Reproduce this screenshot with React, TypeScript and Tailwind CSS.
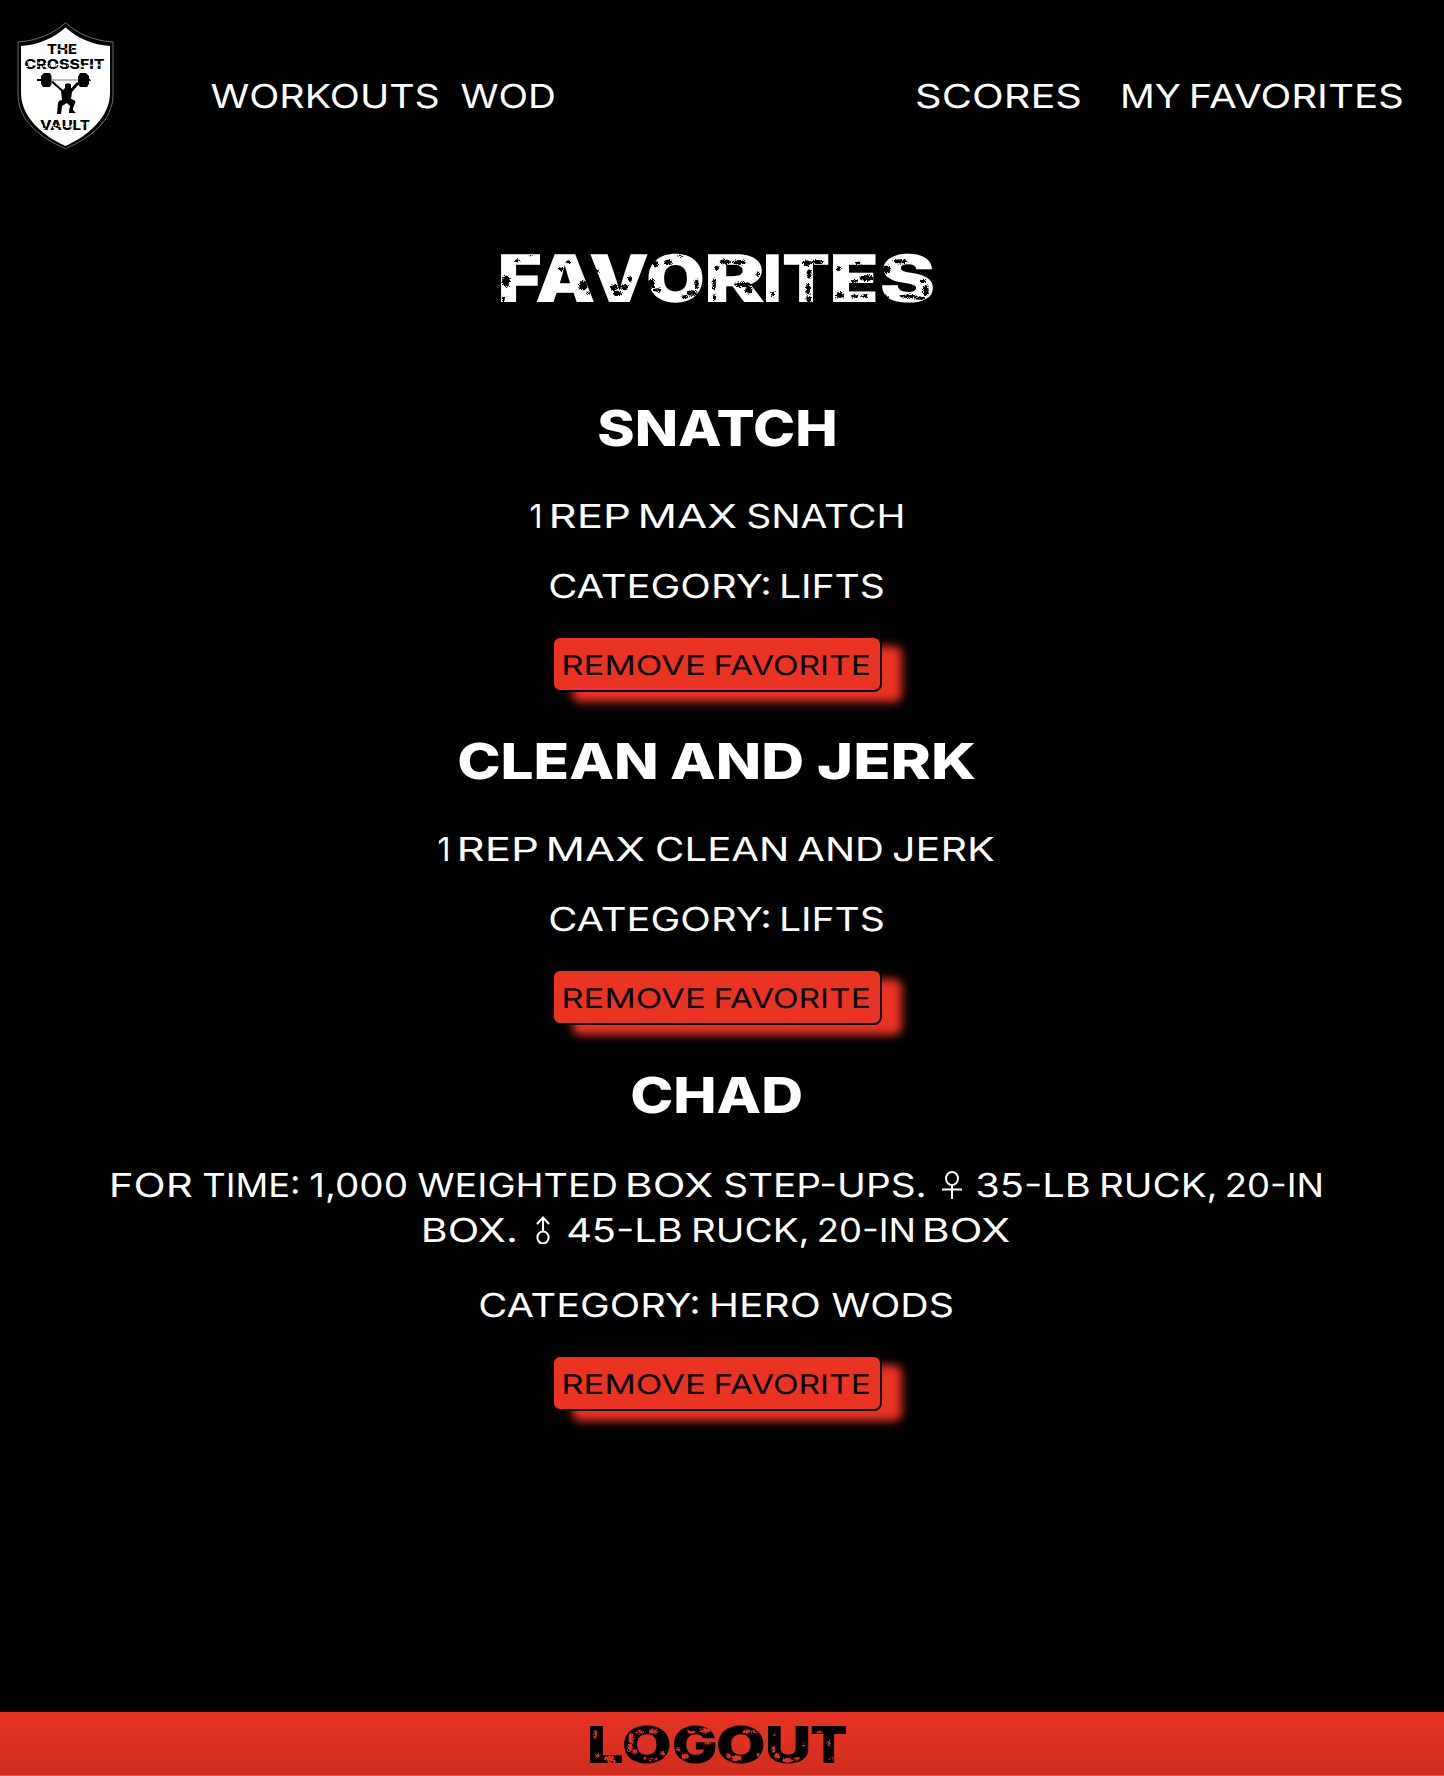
import { Fragment, useMemo } from "react";

const canvas = document.createElement("canvas");

type WordProps = { text: string; w: number; size: number; weight: number };

/** A word stretched horizontally so that its ink is exactly `w` pixels wide. */
function Word({ text, w, size, weight }: WordProps) {
  const { scale, left } = useMemo(() => {
    const ctx = canvas.getContext("2d")!;
    ctx.font = `${weight} ${size * 10}px Inter, sans-serif`;
    const m = ctx.measureText(text);
    const s = ((w - (size < 40 ? 1 : 0)) * 10) / (m.actualBoundingBoxLeft + m.actualBoundingBoxRight);
    return { scale: s, left: (m.actualBoundingBoxLeft * s) / 10 };
  }, [text, w, size, weight]);
  return (
    <span className="inline-block h-full shrink-0 text-left" style={{ width: w }}>
      <span
        className="inline-block origin-left whitespace-pre [text-rendering:geometricPrecision]"
        style={{ transform: `translateX(${left}px) scaleX(${scale})`, fontSize: size, fontWeight: weight }}
      >
        {text}
      </span>
    </span>
  );
}

type Token = [string, number];

/** A row of stretched words; every token is [text, ink width]. */
function Row({ tokens, gap, size, weight, className }: { tokens: Token[]; gap: number; size: number; weight: number; className: string }) {
  return (
    <span className={`flex ${className}`} style={{ columnGap: gap }}>
      {tokens.map(([text, w], i) => (
        <Fragment key={i}>
          {text === "♀" ? <Female /> : text === "♂" ? <Male /> : <Word text={text} w={w} size={size} weight={weight} />}
        </Fragment>
      ))}
    </span>
  );
}

/** Display lettering; every entry is [letters, ink width, space before them]. */
function Lettering({ letters, size, className }: { letters: [string, number, number][]; size: number; className: string }) {
  return (
    <span className={`flex ${className}`}>
      {letters.map(([ch, w, space], i) => (
        <span key={i} style={{ marginLeft: space }}>
          <Word text={ch} w={w} size={size} weight={900} />
        </span>
      ))}
    </span>
  );
}

function Female() {
  return (
    <svg className="-mt-0.5 mr-1 ml-1.5 h-7 w-5 shrink-0" viewBox="0 0 20 28" fill="none" stroke="white" strokeWidth="2" aria-label="♀">
      <ellipse cx="10" cy="7.5" rx="6" ry="6.5" />
      <path d="M10 14v14M0 18.5h20" />
    </svg>
  );
}

function Male() {
  return (
    <svg className="-mt-0.5 mr-1.5 ml-2 h-7 w-4 shrink-0" viewBox="0 0 16 28" fill="none" stroke="white" strokeWidth="2" aria-label="♂">
      <ellipse cx="8" cy="21.5" rx="5.6" ry="6" />
      <path d="M8 16V1M2 8l6-6.5L14 8" />
    </svg>
  );
}

function Logo() {
  return (
    <svg className="h-[128px] w-[98px] shrink-0" viewBox="17 21 98 128" fontFamily="Inter, sans-serif" fontWeight="800" fontSize="12.500">
      <path d="M65.500 22.500C55 33 37 41 18 42V95C18 121 42 139 65.500 148.500C89 139 113 121 113 95V42C94 41 76 33 65.500 22.500Z" fill="#000" stroke="#777" strokeWidth=".9" />
      <path d="M65.500 27.500C54 38 38 45 21 46V93C21 117 43 136 65.500 146C88 136 110 117 110 93V46C93 45 77 38 65.500 27.500Z" fill="#fff" />
      <g fill="#000">
        <text x="47" y="54" textLength="30" lengthAdjust="spacingAndGlyphs">THE</text>
        <text x="24.500" y="69" textLength="80" lengthAdjust="spacingAndGlyphs">CROSSFIT</text>
        <text x="40" y="130" textLength="50" lengthAdjust="spacingAndGlyphs">VAULT</text>
      </g>
      <g stroke="#fff" strokeWidth="1.100" fill="none" strokeDasharray="3 3 1 4 3 4">
        <path d="M47 51L77 48M25 66.500L104 65M27 62L88 67M40 125L90 128M42 129L90 123" />
      </g>
      <path d="M50 80H79" stroke="#777" strokeWidth="1" />
      <path d="M37 79h4v-3l3-3h6l1.500 3v8L50 87h-7l-2-3v-3h-4ZM90 79h-1v-3l-3-3h-6l-2 4v7l2 3h7l2-3v-3h2Z" />
      <path d="M51 82L53 81L63 90L65 88V84.500Q68 82 71 84.500V88.500L77 82L79.500 83.500L72 92L71 99Q75 100 75.500 102L73 108V110L76 113H69V111L70 106L67 103L62 106L61 114H57L58 103Q59 100 62 100L61 91Z" />
    </svg>
  );
}

type Blot = [number, number, number, number];

/** Worn patches laid over a heading. */
function Wear({ id, blots, box, color, className }: { id: string; blots: Blot[]; box: string; color: string; className: string }) {
  return (
    <svg className={`pointer-events-none absolute inset-0 ${className}`} viewBox={box} preserveAspectRatio="none" aria-hidden="true">
      <filter id={id} x="-10%" y="-10%" width="120%" height="120%">
        <feTurbulence type="fractalNoise" baseFrequency=".3" numOctaves="3" seed="4" />
        <feDisplacementMap in="SourceGraphic" scale="14" xChannelSelector="R" yChannelSelector="G" />
      </filter>
      <g fill={color} filter={`url(#${id})`}>
        {blots.map(([x, y, rx, ry], i) => (
          <ellipse key={i} cx={x} cy={y} rx={rx * 0.9} ry={ry * 0.9} />
        ))}
      </g>
    </svg>
  );
}

const titleWear: Blot[] = [
  [78, 152, 13, 20], [70, 205, 5, 8], [112, 90, 8, 5], [150, 74, 6, 3], [265, 93, 7, 5], [244, 116, 9, 6], [310, 165, 14, 16],
  [325, 188, 6, 6], [350, 120, 8, 5], [402, 170, 13, 10], [433, 170, 13, 10], [412, 188, 15, 9], [450, 145, 7, 10], [527, 100, 9, 12],
  [565, 95, 13, 9], [515, 160, 12, 17], [533, 178, 14, 6], [650, 160, 7, 15], [636, 187, 16, 9], [615, 198, 14, 5], [600, 76, 9, 3],
  [735, 94, 17, 8], [778, 95, 22, 8], [710, 112, 8, 8], [703, 160, 6, 20], [704, 200, 5, 10], [790, 162, 28, 9], [807, 178, 12, 12],
  [834, 130, 5, 9], [880, 190, 7, 8], [980, 98, 12, 10], [1012, 94, 24, 7], [988, 130, 8, 15], [985, 175, 7, 20], [987, 205, 8, 10],
  [1077, 114, 7, 8], [1135, 97, 9, 5], [1160, 142, 23, 10], [1125, 152, 10, 6], [1080, 193, 14, 10], [1125, 197, 13, 5], [1155, 196, 12, 6],
  [1220, 116, 14, 13], [1262, 92, 24, 7], [1330, 151, 10, 7], [1338, 180, 10, 19], [1285, 197, 27, 6], [1320, 202, 18, 6], [1217, 200, 11, 7],
];

const logoutWear: Blot[] = [
  [166, 132, 5, 13], [173, 197, 7, 6], [207, 205, 18, 8], [215, 216, 15, 4], [273, 145, 8, 20], [270, 172, 8, 14], [285, 185, 7, 9],
  [298, 126, 14, 5], [340, 124, 14, 7], [368, 190, 8, 8], [340, 208, 16, 3], [315, 205, 5, 5], [495, 122, 18, 8], [455, 126, 14, 4],
  [503, 160, 14, 4], [435, 200, 12, 7], [413, 178, 5, 7], [620, 124, 14, 6], [643, 125, 10, 4], [590, 205, 16, 10], [565, 198, 7, 8],
  [655, 195, 5, 8], [700, 178, 6, 12], [712, 198, 10, 8], [742, 211, 18, 8], [770, 205, 9, 5], [790, 165, 4, 5], [840, 125, 10, 4],
  [866, 160, 4, 13], [873, 205, 9, 3], [704, 135, 3, 4],
];

const ROW = "h-6 justify-center leading-6";

function Favorite({ name, lines, category, gapTop }: { name: Token[]; lines: Token[][]; category: Token[]; gapTop: string }) {
  return (
    <article className={`flex flex-col items-center ${gapTop}`}>
      <h2>
        <Row tokens={name} gap={15.5} size={49.5} weight={800} className="h-9 justify-center leading-9" />
      </h2>
      <div className={lines.length > 1 ? "mt-[60px] flex flex-col gap-[21px]" : "mt-[58px]"}>
        {lines.map((line, i) => (
          <Row key={i} tokens={line} gap={11.3} size={33} weight={400} className={ROW} />
        ))}
      </div>
      <p className={lines.length > 1 ? "mt-[51px]" : "mt-[46px]"}>
        <Row tokens={category} gap={12.5} size={33} weight={400} className={ROW} />
      </p>
      <button className="mt-[38px] flex h-14 w-[330px] items-center justify-center rounded-lg border-2 border-black bg-[#eb3323] pt-1 text-black shadow-[20px_10px_10px_#eb3323]">
        <Row tokens={[["REMOVE", 141], ["FAVORITE", 154]]} gap={11} size={27} weight={400} className="h-5 leading-5" />
      </button>
    </article>
  );
}

export default function App() {
  return (
    <div className="flex h-[1776px] w-[1444px] flex-col overflow-hidden bg-black font-[Inter,sans-serif] text-white">
      <header className="flex h-[170px] items-start pt-[21px] pl-[17px]">
        <Logo />
        <nav className="flex flex-1 justify-between pt-[63px] pr-[41px] pl-[96px]">
          <div className="flex gap-[22px]">
            <Row tokens={[["WORKOUTS", 228]]} gap={0} size={33} weight={400} className={ROW} />
            <Row tokens={[["WOD", 94]]} gap={0} size={33} weight={400} className={ROW} />
          </div>
          <div className="flex gap-[42px]">
            <Row tokens={[["SCORES", 164]]} gap={0} size={33} weight={400} className={ROW} />
            <Row tokens={[["MY", 58], ["FAVORITES", 211]]} gap={11.5} size={33} weight={400} className={ROW} />
          </div>
        </nav>
      </header>
      <main className="flex w-[1434px] flex-1 flex-col items-center pt-[85px]">
        <h1 className="relative">
          <Lettering
            size={65.5}
            letters={[["FAVO", 202, 0], ["R", 56, 5], ["I", 13, 2], ["T", 46, 3.5], ["E", 43, 4], ["S", 52, 5]]}
            className="h-12 leading-[48px]"
          />
          <Wear id="title-wear" blots={titleWear} box="63 73 1297 144" color="#000" className="h-12 w-[432px]" />
        </h1>
        <Favorite
          gapTop="mt-[107px]"
          name={[["SNATCH", 236]]}
          lines={[[["1", 10], ["REP", 78], ["MAX", 96], ["SNATCH", 155]]]}
          category={[["CATEGORY:", 220], ["LIFTS", 102]]}
        />
        <Favorite
          gapTop="mt-[51px]"
          name={[["CLEAN", 197], ["AND", 131], ["JERK", 157]]}
          lines={[[["1", 10], ["REP", 78], ["MAX", 96], ["CLEAN", 130], ["AND", 85], ["JERK", 101]]]}
          category={[["CATEGORY:", 220], ["LIFTS", 102]]}
        />
        <Favorite
          gapTop="mt-[52px]"
          name={[["CHAD", 169]]}
          lines={[
            [["FOR", 81], ["TIME:", 95], ["1,000", 96], ["WEIGHTED", 199], ["BOX", 85], ["STEP-UPS.", 200], ["♀", 20], ["35-LB", 113], ["RUCK,", 114], ["20-IN", 95]],
            [["BOX.", 92], ["♂", 16], ["45-LB", 114], ["RUCK,", 114], ["20-IN", 95], ["BOX", 85]],
          ]}
          category={[["CATEGORY:", 219], ["HERO", 108], ["WODS", 121]]}
        />
      </main>
      <footer className="flex h-16 items-start justify-center border-b border-[#d8584d] bg-linear-to-b from-[#e93323] to-[#cf2d20] pt-[15px] pr-2 text-black">
        <button className="relative">
          <Lettering
            size={51}
            letters={[["L", 32.5, 0], ["O", 46, 1.5], ["G", 41.5, 3.5], ["O", 46, 3], ["U", 41, 4], ["T", 35.5, 1.5]]}
            className="h-[37px] leading-[37px]"
          />
          <Wear id="logout-wear" blots={logoutWear} box="150 111 768 111" color="#dd3022" className="h-[37px] w-[256px]" />
        </button>
      </footer>
    </div>
  );
}
